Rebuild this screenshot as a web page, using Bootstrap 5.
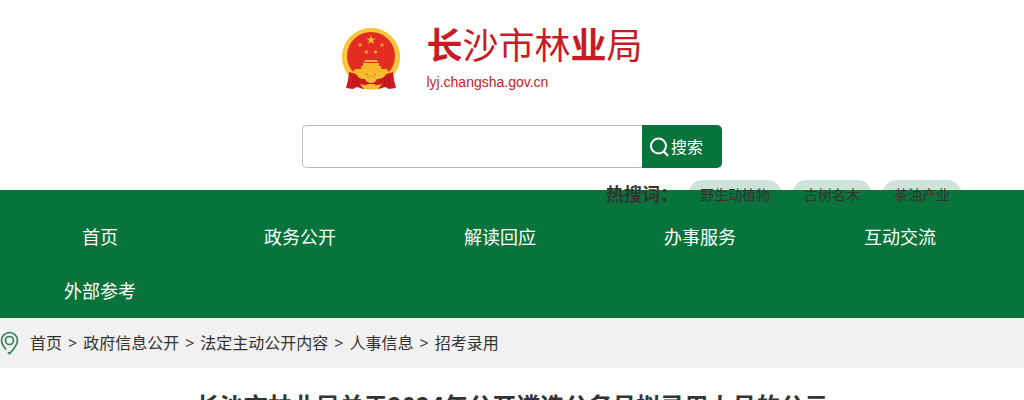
<!DOCTYPE html>
<html lang="zh-CN">
<head>
<meta charset="utf-8">
<meta name="viewport" content="width=device-width, initial-scale=1">
<title>长沙市林业局</title>
<link rel="stylesheet" href="https://cdn.jsdelivr.net/npm/bootstrap@5.3.0/dist/css/bootstrap.min.css">
<style>
:root { --forest: #08733a; --brand-red: #c71c26; --ink: #333; }
body { font-family: "Open Sans", "Noto Sans CJK SC", sans-serif; color: var(--ink); font-size: 16px; line-height: 24px; overflow-x: hidden; }
a { color: inherit; text-decoration: none; }
.masthead { padding-top: 24px; padding-bottom: 22px; }
.brand { gap: 25px; padding-right: 40px; margin-bottom: 31px; }
.brand-name { font-family: "Noto Sans CJK SC", sans-serif; font-size: 36px; line-height: 38px; color: var(--brand-red); }
.brand-url { font-family: "Liberation Sans", sans-serif; font-size: 14px; line-height: 20px; margin-top: 10px; color: var(--brand-red); }
.search { width: 420px; max-width: 100%; height: 43px; }
.search .form-control { border-color: #bbb; border-right: 0; border-radius: 5px 0 0 5px; }
.search .btn { width: 80px; background: var(--forest); color: #fff; border: 0; border-radius: 0 5px 5px 0; padding: 0 8px; gap: 2px; font-size: 16px; }
.hot { top: 180px; right: 62px; gap: 10px; }
.hot-label { font-size: 18px; line-height: 28px; }
.hot a { font-size: 14px; line-height: 30px; padding: 0 12px; border-radius: 15px; background: rgba(8, 115, 58, .2); }
.main-nav { background: var(--forest); padding: 20px 24px 0 0; }
.main-nav a { color: #fff; font-size: 18px; line-height: 54px; }
.crumbs { background: #f1f1f1; height: 50px; gap: 10px; }
.crumbs .breadcrumb { --bs-breadcrumb-divider: ">"; --bs-breadcrumb-divider-color: var(--ink); --bs-breadcrumb-item-padding-x: 6px; }
.article-title { font-family: "Noto Sans CJK SC", sans-serif; font-size: 24px; line-height: 36px; padding-top: 19px; }
</style>
</head>
<body>
<header class="masthead position-relative d-flex flex-column align-items-center">
  <a class="brand d-flex align-items-start" href="#">
    <svg width="60" height="70" viewBox="0 -3 60 70" role="img" aria-label="国徽">
      <defs><path id="star" d="M0-5 1.200-1.600H4.800L1.900.6 3 4 0 1.900-3 4-1.900.6-4.800-1.600H-1.200Z"/></defs>
      <circle cx="30" cy="30" r="29" fill="#f5c02e"/>
      <circle cx="30" cy="30" r="26" fill="none" stroke="#f9cb40" stroke-width="3" stroke-dasharray="4 1"/>
      <circle cx="30" cy="29" r="24" fill="#e52c22"/>
      <g fill="#f6b92c">
        <use href="#star" transform="translate(30 13)"/>
        <use href="#star" transform="translate(19 18) scale(.5)"/>
        <use href="#star" transform="translate(41 18) scale(.5)"/>
        <use href="#star" transform="translate(25.500 25) scale(.5)"/>
        <use href="#star" transform="translate(34.500 25) scale(.5)"/>
        <path d="M24 33h12l1 2H23zM22 36h16v3h2v3H20v-3h2zM14 42h32l3 5H11z"/>
      </g>
      <path d="M8 45l10 3 5 3 7 1 7-1 5-3 10-3 1 8 2 8-7 1-4-2-6 2-8-2-8 2-6-2-4 2-7-1 2-8z" fill="#cf1b20"/>
      <path d="M12 49v11M16 50v10M44 50v10M48 49v11" stroke="#a9141a" fill="none"/>
      <path d="M15 47q8-3 11 1 4-4 8 0 3-4 11-1-2 5-9 5-2 4-6 4t-6-4q-7 0-9-5z" fill="#f6bf2f"/>
      <path d="M26 51q4-4 8 0" fill="none" stroke="#e08b1f"/>
      <path d="M19 57q6 2 8 0h6q2 2 8 0l-4 5q-7 1-14 0z" fill="#f5be2e"/>
    </svg>
    <span>
      <span class="brand-name d-block"><b>长</b>沙市林<b>业</b>局</span>
      <span class="brand-url d-block">lyj.changsha.gov.cn</span>
    </span>
  </a>
  <form class="search d-flex" role="search">
    <input class="form-control shadow-none" type="search" aria-label="搜索内容">
    <button class="btn d-flex align-items-center flex-shrink-0" type="button">
      <svg width="19" height="20" viewBox="0 0 19 20" fill="none" stroke="#fff" stroke-width="2" aria-hidden="true"><circle cx="8.500" cy="9" r="7.500"/><path d="M13.500 14l4.500 5"/></svg>
      <span>搜索</span>
    </button>
  </form>
  <div class="hot position-absolute d-flex text-nowrap">
    <strong class="hot-label">热搜词：</strong>
    <a href="#">野生动植物</a>
    <a href="#">古树名木</a>
    <a href="#">茶油产业</a>
  </div>
</header>
<nav class="main-nav" aria-label="主导航">
  <ul class="row row-cols-5 g-0 list-unstyled mb-0 text-center">
    <li class="col"><a class="d-block" href="#">首页</a></li>
    <li class="col"><a class="d-block" href="#">政务公开</a></li>
    <li class="col"><a class="d-block" href="#">解读回应</a></li>
    <li class="col"><a class="d-block" href="#">办事服务</a></li>
    <li class="col"><a class="d-block" href="#">互动交流</a></li>
    <li class="col"><a class="d-block" href="#">外部参考</a></li>
  </ul>
</nav>
<nav class="crumbs d-flex align-items-center" aria-label="当前位置">
  <svg width="20" height="24" viewBox="0 0 20 24" fill="none" stroke="#2a8050" stroke-width="1.600" aria-hidden="true"><path d="M6 18.500C3.500 15.500 1.500 12.500 1.500 9.500a8 8 0 0 1 16 0c0 4.500-4 9-8 13.300L8 21"/><circle cx="9.500" cy="9.500" r="4"/></svg>
  <ol class="breadcrumb mb-0">
    <li class="breadcrumb-item"><a href="#">首页</a></li>
    <li class="breadcrumb-item"><a href="#">政府信息公开</a></li>
    <li class="breadcrumb-item"><a href="#">法定主动公开内容</a></li>
    <li class="breadcrumb-item"><a href="#">人事信息</a></li>
    <li class="breadcrumb-item"><a href="#">招考录用</a></li>
  </ol>
</nav>
<main>
  <h1 class="article-title fw-bold text-center mb-0">长沙市林业局关于2024年公开遴选公务员拟录用人员的公示</h1>
</main>
<script src="https://cdn.jsdelivr.net/npm/bootstrap@5.3.0/dist/js/bootstrap.bundle.min.js"></script>
</body>
</html>
